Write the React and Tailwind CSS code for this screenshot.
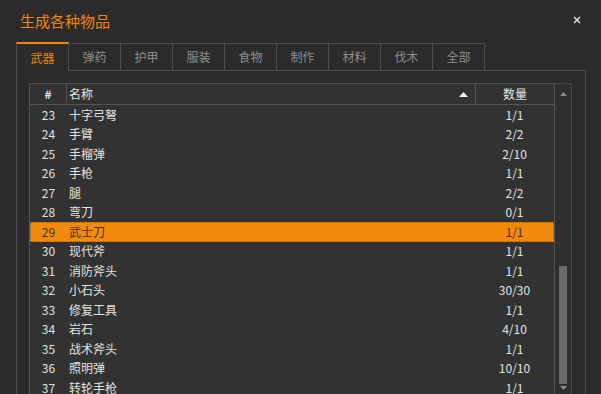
import React from 'react';

const tabs = ['武器', '弹药', '护甲', '服装', '食物', '制作', '材料', '伐木', '全部'];

const rows = [
  [23, '十字弓弩', '1/1'],
  [24, '手臂', '2/2'],
  [25, '手榴弹', '2/10'],
  [26, '手枪', '1/1'],
  [27, '腿', '2/2'],
  [28, '弯刀', '0/1'],
  [29, '武士刀', '1/1'],
  [30, '现代斧', '1/1'],
  [31, '消防斧头', '1/1'],
  [32, '小石头', '30/30'],
  [33, '修复工具', '1/1'],
  [34, '岩石', '4/10'],
  [35, '战术斧头', '1/1'],
  [36, '照明弹', '10/10'],
  [37, '转轮手枪', '1/1'],
];

function Row({ id, name, qty, selected }) {
  if (selected) {
    return (
      <div className="flex h-[19.5px] items-center bg-[#f28a0b] text-[#3a3326] outline outline-1 outline-dotted outline-[#4f6f9a] -outline-offset-1">
        <div className="w-[37px] text-center">{id}</div>
        <div className="flex-1 pl-[2px]">{name}</div>
        <div className="w-[79px] text-center">{qty}</div>
      </div>
    );
  }
  return (
    <div className="flex h-[19.5px] items-center text-[#e2e2e2]">
      <div className="w-[37px] text-center">{id}</div>
      <div className="flex-1 pl-[2px]">{name}</div>
      <div className="w-[79px] text-center">{qty}</div>
    </div>
  );
}

export default function App() {
  return (
    <div
      className="relative w-[601px] h-[394px] overflow-hidden bg-[#2b2b2b]"
      style={{ fontFamily: '"Noto Sans CJK SC", "Noto Sans", sans-serif' }}
    >
      <div className="h-[42px] pl-[20px] pt-[1px] flex items-center text-[15px] text-[#f0870a]">
        生成各种物品
      </div>
      <button className="absolute left-[572px] top-[15px] w-[10px] h-[10px] flex items-center justify-center">
        <svg width="8" height="8" viewBox="0 0 8 8">
          <path d="M1 1L7 7M7 1L1 7" stroke="#dcdcdc" strokeWidth="1.6" />
        </svg>
      </button>

      <div className="flex items-end h-[28px] pl-[16px] text-[12px]">
        {tabs.map((t, i) =>
          i === 0 ? (
            <div
              key={t}
              className="relative z-10 -mb-px h-[29px] w-[53px] flex items-center justify-center border-t-2 border-l border-r border-t-[#f0870a] border-l-[#4d4d4d] border-r-[#4d4d4d] bg-[#2b2b2b] text-[#f0870a]"
            >
              {t}
            </div>
          ) : (
            <div
              key={t}
              className="h-[27px] w-[52px] flex items-center justify-center border-t border-r border-[#4d4d4d] text-[#8e8e8e]"
            >
              {t}
            </div>
          )
        )}
      </div>

      <div className="ml-[16px] w-[570px] h-[400px] border border-[#4d4d4d] pt-[12px] pl-[12px] pr-[12px]">
        <div className="flex h-full text-[12px]">
          <div className="w-[526px] border border-[#545454] bg-[#323232]">
            <div className="flex h-[21px] items-center border-b border-[#545454] text-[#e6e6e6]">
              <div className="w-[37px] h-full flex items-center justify-center border-r border-[#545454] font-bold">#</div>
              <div className="flex-1 h-full flex items-center pl-[2px] border-r border-[#545454]">
                <span className="flex-1">名称</span>
                <svg width="9" height="5" viewBox="0 0 9 5" className="mr-[7px]">
                  <path d="M0 5L4.5 0L9 5Z" fill="#f0f0f0" />
                </svg>
              </div>
              <div className="w-[78px] h-full flex items-center justify-center">数量</div>
            </div>
            {rows.map(([id, name, qty]) => (
              <Row key={id} id={id} name={name} qty={qty} selected={id === 29} />
            ))}
          </div>
          <div className="w-[17px] border-t border-r border-b border-[#4a4a4a] bg-[#2f2f2f] flex flex-col items-center">
            <svg width="7" height="4" viewBox="0 0 7 4" className="mt-[8px]">
              <path d="M0 4L3.5 0L7 4Z" fill="#8a8a8a" />
            </svg>
            <div className="mt-[170px] w-[8px] h-[118px] bg-[#6a6a6a]"></div>
            <svg width="7" height="4" viewBox="0 0 7 4" className="mt-[2px]">
              <path d="M0 0L3.5 4L7 0Z" fill="#8a8a8a" />
            </svg>
          </div>
        </div>
      </div>
    </div>
  );
}
